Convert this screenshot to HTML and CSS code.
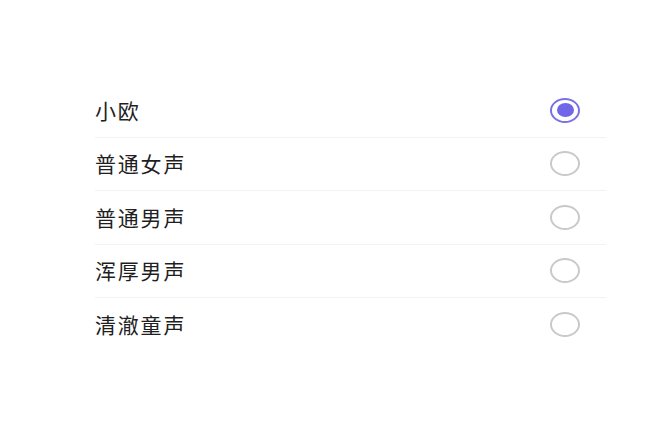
FILE: index.html
```html
<!DOCTYPE html>
<html lang="zh">
<head>
<meta charset="utf-8">
<link rel="stylesheet" href="styles.css">
</head>
<body>
<div class="page">
  <ul class="list">
    <li class="row"><span class="label">小欧</span><span class="radio checked"></span></li>
    <li class="row"><span class="label">普通女声</span><span class="radio"></span></li>
    <li class="row"><span class="label">普通男声</span><span class="radio"></span></li>
    <li class="row"><span class="label">浑厚男声</span><span class="radio"></span></li>
    <li class="row"><span class="label">清澈童声</span><span class="radio"></span></li>
  </ul>
</div>
</body>
</html>
```
FILE: styles.css
```css
html, body {
  margin: 0;
  padding: 0;
  background: #ffffff;
}
.page {
  width: 650px;
  height: 429px;
  padding-top: 84px;
  box-sizing: border-box;
}
.list {
  list-style: none;
  margin: 0 0 0 95px;
  padding: 0;
  width: 511px;
  display: flex;
  flex-direction: column;
}
.row {
  height: 53.5px;
  box-sizing: border-box;
  display: flex;
  align-items: center;
  justify-content: space-between;
  padding-right: 26px;
  border-bottom: 1px solid #f3f3f3;
}
.row:last-child {
  border-bottom: none;
}
.label {
  font-family: "Noto Sans CJK SC", "Noto Sans", sans-serif;
  font-size: 21px;
  font-weight: 400;
  letter-spacing: 1.8px;
  color: #1f1f1f;
  line-height: 1;
}
.radio {
  width: 30px;
  height: 25px;
  box-sizing: border-box;
  border: 2px solid #c9c9c9;
  border-radius: 50%;
  display: flex;
  align-items: center;
  justify-content: center;
}
.radio.checked {
  border-color: #7a70e6;
}
.radio.checked::after {
  content: "";
  width: 17px;
  height: 14px;
  border-radius: 50%;
  background: #6f66e8;
}
```
